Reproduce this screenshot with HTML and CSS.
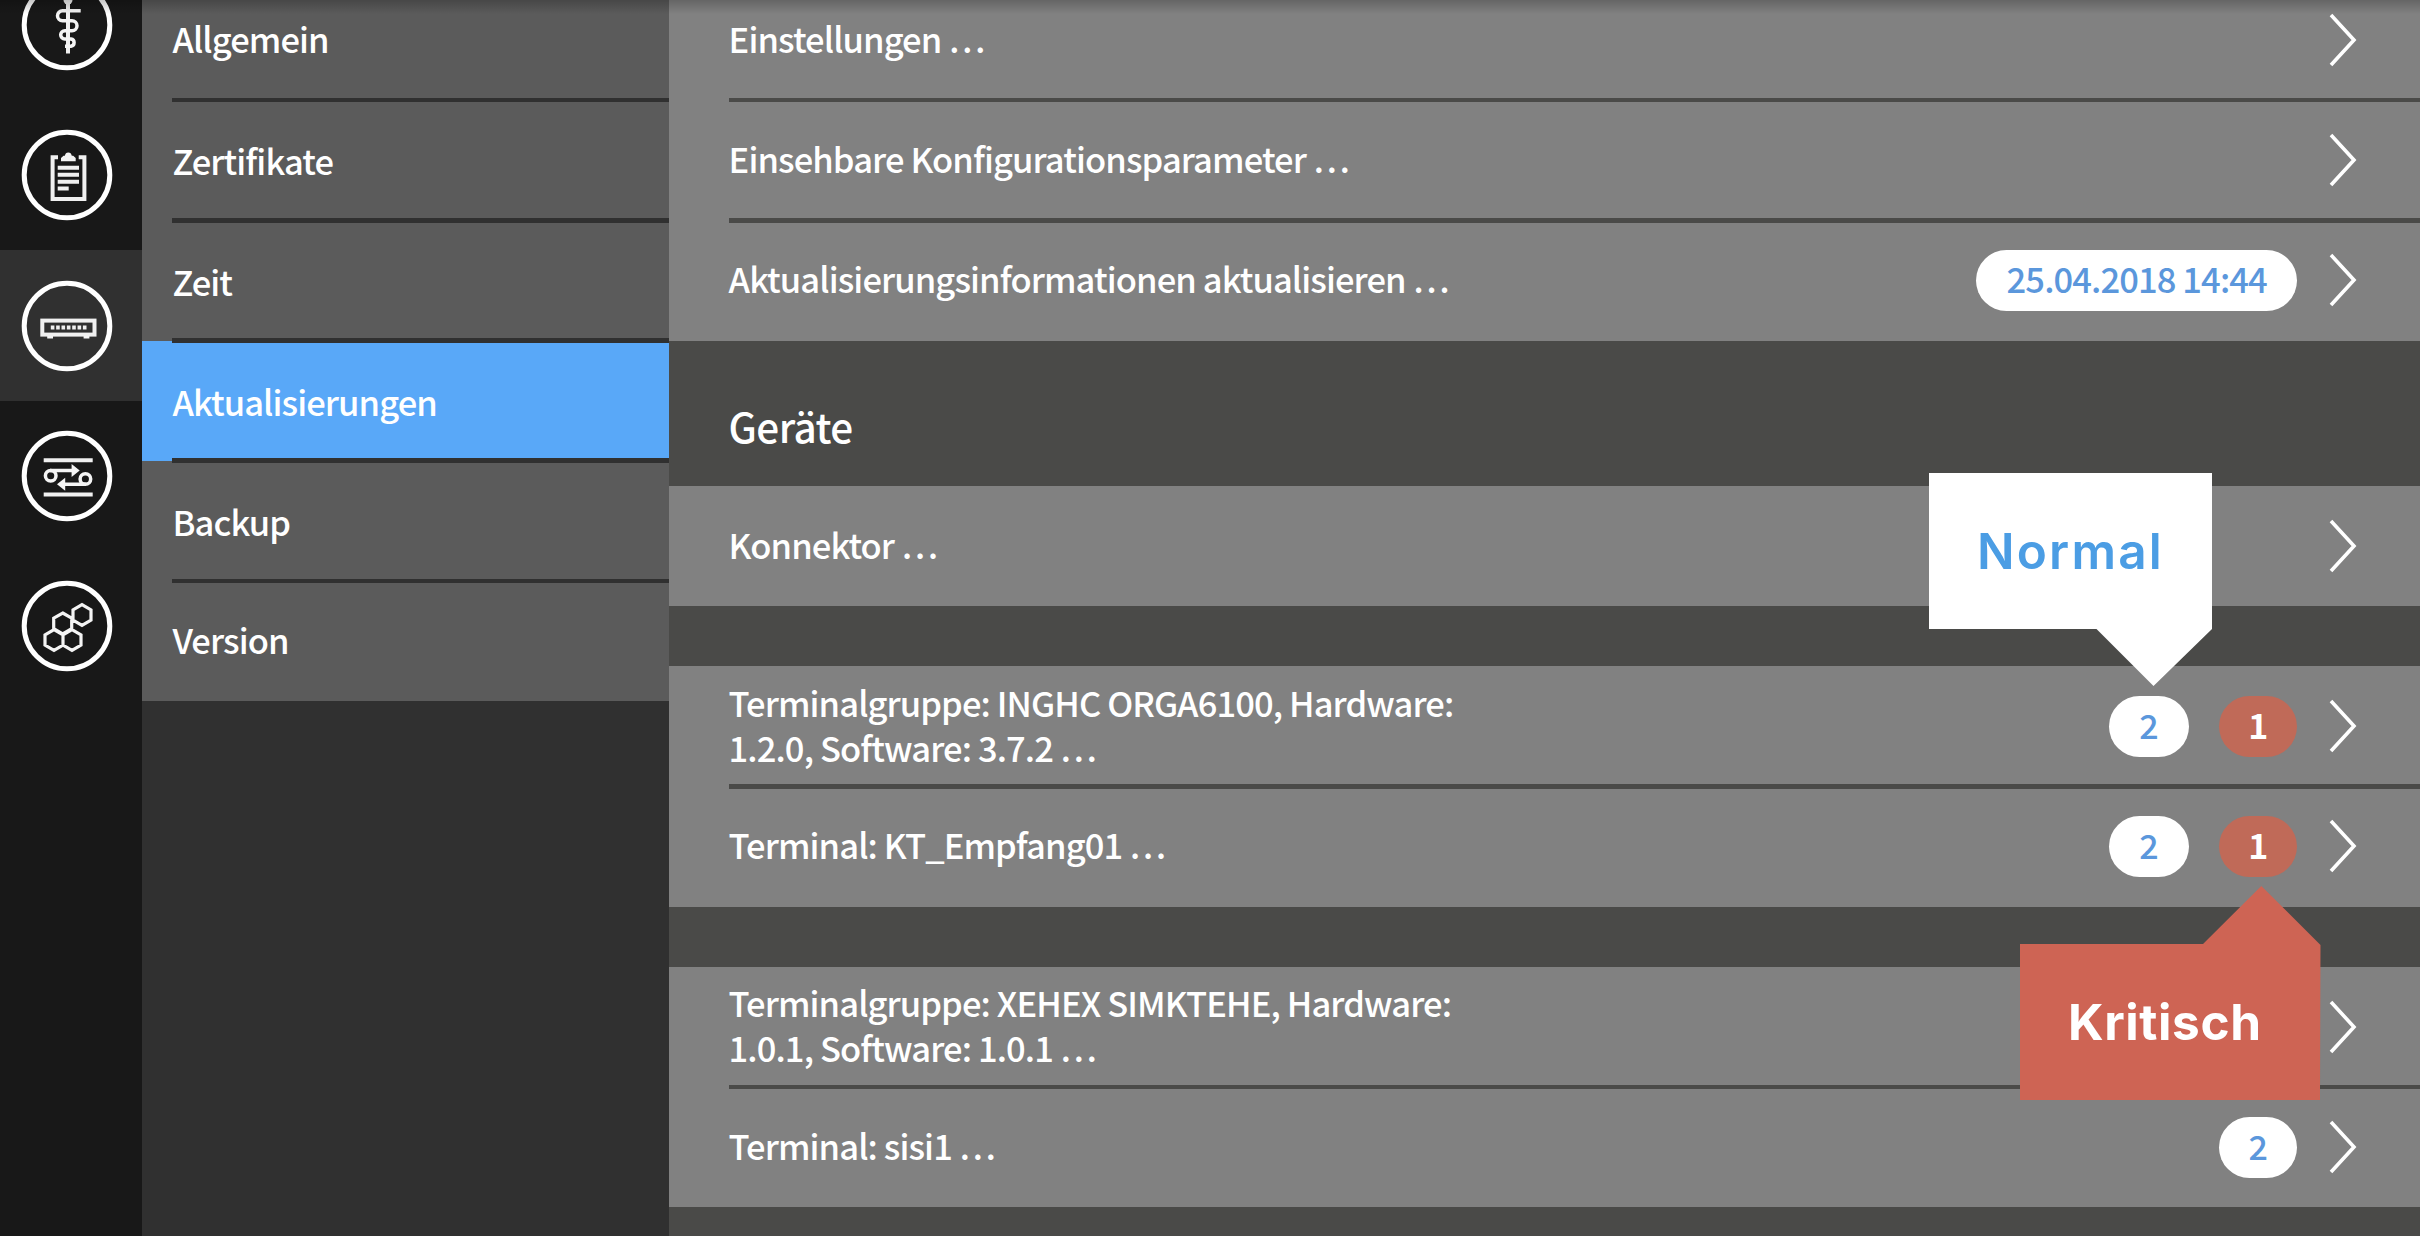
FILE: index.html
```html
<!DOCTYPE html>
<html lang="de">
<head>
<meta charset="utf-8">
<title>Aktualisierungen</title>
<link rel="stylesheet" href="styles.css">
</head>
<body>
<svg width="0" height="0" class="defs" aria-hidden="true">
  <symbol id="chevron" viewBox="0 0 28 54"><path d="M2 2 L25 27 L2 52" fill="none" stroke="#fff" stroke-width="3.6"/></symbol>
</svg>
<div class="app">
  <nav class="rail">
    <a class="rail-item"><svg class="icon" viewBox="-46 -46 92 92"><circle r="42.8" class="ring"/><path class="s4" d="M1 -25V28.5"/><circle class="f" cx="1" cy="-25" r="4.5"/><path class="s35" d="M13.7 -14.3H-4.5A5 5 0 0 0 -4.5 -4.3H5A5 5 0 0 1 5 5.7H-2.2A4.1 4.1 0 0 0 -2.2 13.9H4A3.7 3.7 0 0 1 4 21.2H-2"/></svg></a>
    <a class="rail-item"><svg class="icon" viewBox="-46 -46 92 92"><circle r="42.8" class="ring"/><path class="s4" d="M-9 -17.7H-14.4V24H17.4V-17.7H11.7M-9.3 -7.3H12M-9.3 -.3H12M-9.3 6.7H12M-9.3 13.4H1.7"/><path class="f" d="M-6 -13.7V-17L-3.5 -19.2H-2.2Q-1.6 -22.6 1.3 -22.6T4.8 -19.2H6.2L8.7 -17V-13.7Z"/></svg></a>
    <a class="rail-item active"><svg class="icon" viewBox="-46 -46 92 92"><circle r="42.8" class="ring"/><rect class="s4" x="-24.7" y="-5.4" width="52.2" height="14"/><path class="dots" d="M-16.2 1.4H19.6"/><path class="f" d="M-19.8 10H-14V12.4H-19.8ZM16.6 10H22.4V12.4H16.6Z"/></svg></a>
    <a class="rail-item"><svg class="icon" viewBox="-46 -46 92 92"><circle r="42.8" class="ring"/><path class="s4" d="M-23.3 -15.7H25.7M-23.3 18.6H25.7"/><circle class="s35" cx="-16.3" cy="-.3" r="5.3"/><circle class="s35" cx="18.4" cy="3" r="5.3"/><path class="s35" d="M-17 -5.4H8M19 8.3H-5"/><path class="f" d="M12.7 -5.4L4.6 -12V1ZM-10 8.3L-1.8 1.7V14.7Z"/></svg></a>
    <a class="rail-item"><svg class="icon" viewBox="-46 -46 92 92"><circle r="42.8" class="ring"/><path class="hex" d="M15 -21.4l9 5.2v10.4l-9 5.2l-9 -5.2v-10.4ZM-4.3 -13l9 5.2v10.4l-9 5.2l-9 -5.2v-10.4ZM-13 3.6l9 5.2v10.4l-9 5.2l-9 -5.2v-10.4ZM5 3.6l9 5.2v10.4l-9 5.2l-9 -5.2v-10.4Z"/></svg></a>
  </nav>
  <aside class="side">
    <ul class="menu">
      <li class="menu-item first">Allgemein</li>
      <li class="menu-item">Zertifikate</li>
      <li class="menu-item">Zeit</li>
      <li class="menu-item active">Aktualisierungen</li>
      <li class="menu-item">Backup</li>
      <li class="menu-item last">Version</li>
    </ul>
  </aside>
  <main class="main">
    <section class="group">
      <div class="row"><span class="label">Einstellungen …</span><svg class="chev"><use href="#chevron"/></svg></div>
      <div class="row"><span class="label">Einsehbare Konfigurationsparameter …</span><svg class="chev"><use href="#chevron"/></svg></div>
      <div class="row"><span class="label">Aktualisierungsinformationen aktualisieren …</span><span class="pill date"><span>25.04.2018 14:44</span></span><svg class="chev"><use href="#chevron"/></svg></div>
    </section>
    <h2 class="heading">Geräte</h2>
    <section class="group">
      <div class="row"><span class="label">Konnektor …</span><svg class="chev"><use href="#chevron"/></svg></div>
    </section>
    <section class="group">
      <div class="row"><span class="label">Terminalgruppe: INGHC ORGA6100, Hardware: 1.2.0, Software: 3.7.2 …</span><span class="pill count wide"><span>2</span></span><span class="pill count critical"><span>1</span></span><svg class="chev"><use href="#chevron"/></svg></div>
      <div class="row"><span class="label">Terminal: KT_Empfang01 …</span><span class="pill count wide"><span>2</span></span><span class="pill count critical"><span>1</span></span><svg class="chev"><use href="#chevron"/></svg></div>
    </section>
    <section class="group">
      <div class="row"><span class="label">Terminalgruppe: XEHEX SIMKTEHE, Hardware: 1.0.1, Software: 1.0.1 …</span><svg class="chev"><use href="#chevron"/></svg></div>
      <div class="row"><span class="label">Terminal: sisi1 …</span><span class="pill count"><span>2</span></span><svg class="chev"><use href="#chevron"/></svg></div>
    </section>
  </main>
  <div class="top-shadow"></div>
  <div class="callout normal"><span>Normal</span></div>
  <div class="callout kritisch"><span>Kritisch</span></div>
</div>
</body>
</html>
```
FILE: styles.css
```css
* { box-sizing: border-box; }
body {
  margin: 0;
  color: #fff;
  font: 500 34.5px/45px "Noto Sans CJK SC", "Noto Sans", sans-serif;
  letter-spacing: -.9px;
}
.defs { position: absolute; }
.app {
  position: relative;
  display: flex;
  width: 2420px;
  height: 1236px;
  overflow: hidden;
}

/* icon rail */
.rail {
  flex: none;
  width: 142.4px;
  background: #181818;
}
.rail-item {
  display: flex;
  align-items: center;
  height: 150.25px;
  padding-left: 21.3px;
}
.rail-item:first-child { margin-top: -50.1px; }
.rail-item.active { background: #303030; }
.icon { width: 92px; height: 92px; }
.ring { fill: none; stroke: #fff; stroke-width: 5; }
.s4 { fill: none; stroke: #f0f0f0; stroke-width: 4; }
.s35 { fill: none; stroke: #f4f4f4; stroke-width: 3.5; }
.f { fill: #f4f4f4; }
.dots { fill: none; stroke: #f0f0f0; stroke-width: 4; stroke-dasharray: 3.6 1.75; }
.hex { fill: none; stroke: #f4f4f4; stroke-width: 3.2; }

/* section menu */
.side {
  flex: none;
  width: 526.2px;
  background: #303030;
}
.menu {
  margin: -20.25px 0 0;
  padding: 0;
  list-style: none;
  background: #5b5b5b;
}
.menu-item {
  position: relative;
  display: flex;
  align-items: center;
  height: 120.25px;
  padding: 1.5px 0 0 30px;
}
.menu-item.first, .menu-item.last { padding: 0 0 3.5px 30px; }
.menu-item.active { background: #59a8f8; }
.menu-item + .menu-item::before,
.row + .row::before {
  content: "";
  position: absolute;
  z-index: 1;
  top: -2.4px;
  right: 0;
  left: 30px;
  height: 4.8px;
  background: #303030;
}

/* content */
.main {
  flex: 1;
  background: #4a4a48;
}
.group { background: #818181; }
.group:first-child { margin-top: -20.25px; }
.group + .group { margin-top: 60.25px; }
.row {
  position: relative;
  display: flex;
  align-items: center;
  height: 120.25px;
  padding: 0 62.8px 0 60px;
}
.row + .row::before { left: 60px; background: #4a4a48; }
.label {
  width: 750px;
  margin-right: auto;
  padding-bottom: 3px;
}
.heading {
  height: 145px;
  margin: 0;
  padding: 62px 0 0 60px;
  font-size: 40.5px;
  font-weight: 500;
  letter-spacing: -.6px;
}
.chev {
  flex: none;
  width: 28px;
  height: 54px;
  margin-left: 32px;
}
.pill {
  display: flex;
  flex: none;
  align-items: center;
  justify-content: center;
  height: 61px;
  padding-bottom: 4px;
  border-radius: 30.5px;
  background: #fff;
  color: #5b97dc;
}
.date { width: 321px; }
.count { width: 78px; font-size: 34px; letter-spacing: 0; }
.wide { width: 80.5px; margin-right: 30px; }
.critical { background: #c06a58; color: #fff; font-weight: 700; }

/* overlays */
.top-shadow {
  position: absolute;
  z-index: 2;
  inset: 0 0 auto;
  height: 14px;
  background: linear-gradient(rgba(0, 0, 0, .22), rgba(0, 0, 0, 0));
}
.callout {
  position: absolute;
  z-index: 3;
  display: flex;
  font: 600 49.5px/60px Inter, "Open Sans", sans-serif;
}
.normal {
  top: 473px;
  left: 1929px;
  width: 284px;
  height: 213px;
  padding: 48px 0 0 48px;
  background: #fff;
  color: #4b9de4;
  letter-spacing: 2.2px;
  clip-path: polygon(0 0, 283px 0, 283px 156px, 224.5px 213px, 167.5px 156px, 0 156px);
}
.kritisch {
  top: 886px;
  left: 2020px;
  width: 301px;
  height: 214px;
  padding: 106px 0 0 48px;
  background: #ce6454;
  font-weight: 700;
  letter-spacing: .6px;
  clip-path: polygon(0 58px, 183px 58px, 241.3px 0, 300.5px 59px, 300px 214px, 0 214px);
}
```
